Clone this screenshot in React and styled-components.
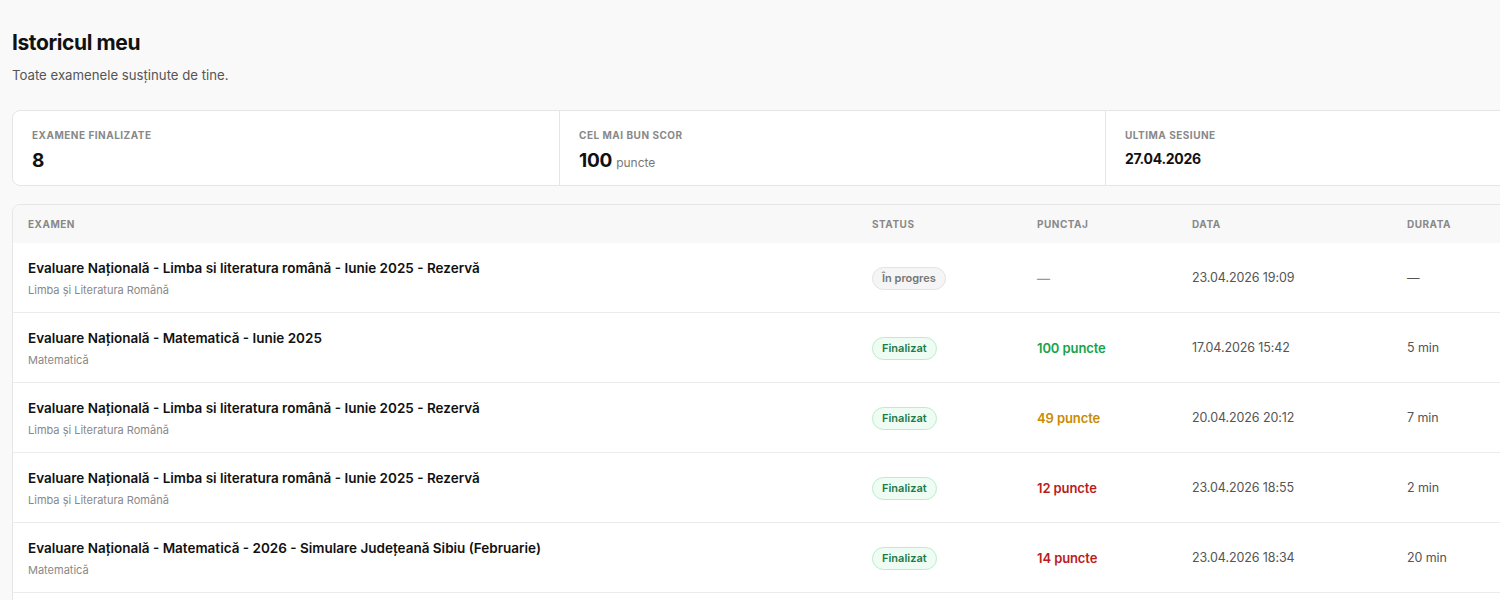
import React from "react";
import styled, { createGlobalStyle } from "styled-components";

const GlobalStyle = createGlobalStyle`
  html, body {
    margin: 0;
    padding: 0;
    background: #f9f9f9;
    overflow: hidden;
  }
  body {
    font-family: Inter, "Liberation Sans", Arial, sans-serif;
    color: #111111;
  }
`;

const Page = styled.div`
  width: 1650px;
  padding: 30px 0 0 12px;
`;

const Title = styled.h1`
  margin: 0;
  font-size: 21px;
  font-weight: 700;
  letter-spacing: -0.4px;
  line-height: 26px;
  color: #111;
`;

const Subtitle = styled.p`
  margin: 10px 0 0;
  font-size: 13.2px;
  line-height: 18px;
  color: #555;
`;

const StatsCard = styled.div`
  margin-top: 26px;
  display: grid;
  grid-template-columns: repeat(3, 546px);
  background: #fff;
  border: 1px solid #e6e6e6;
  border-radius: 8px;
`;

const StatCell = styled.div`
  padding: 17px 19px 14px;
  height: 74px;
  box-sizing: border-box;
  border-left: ${(p) => (p.$first ? "none" : "1px solid #e6e6e6")};
`;

const StatLabel = styled.div`
  font-size: 10px;
  font-weight: 700;
  letter-spacing: 0.5px;
  text-transform: uppercase;
  color: #888;
  line-height: 14px;
`;

const StatValue = styled.div`
  margin-top: ${(p) => (p.$small ? "5px" : "7px")};
  font-size: ${(p) => (p.$small ? "14px" : "19px")};
  font-weight: 700;
  letter-spacing: -0.3px;
  line-height: 24px;
  color: #111;
  & span {
    font-size: 12px;
    font-weight: 400;
    letter-spacing: 0;
    color: #777;
  }
`;

const Table = styled.div`
  margin-top: 18px;
  padding-bottom: 16px;
  background: #fff;
  border: 1px solid #e6e6e6;
  border-radius: 8px;
  overflow: hidden;
`;

const Row = styled.div`
  display: grid;
  grid-template-columns: 844px 165px 155px 215px 1fr;
  align-items: center;
  padding-left: 15px;
  height: ${(p) => (p.$head ? "38px" : "69px")};
  background: ${(p) => (p.$head ? "#f8f8f8" : "#fff")};
  border-bottom: ${(p) => (p.$head ? "none" : "1px solid #ececec")};
`;

const HeadCell = styled.div`
  font-size: 10px;
  font-weight: 700;
  letter-spacing: 0.5px;
  color: #888;
`;

const ExamTitle = styled.div`
  font-size: 13.5px;
  font-weight: 600;
  color: #111;
  line-height: 18px;
`;

const ExamSubject = styled.div`
  margin-top: 6px;
  font-size: 11px;
  color: #888;
  line-height: 14px;
`;

const Badge = styled.span`
  display: inline-block;
  padding: 3px 9px;
  border-radius: 999px;
  font-size: 11px;
  font-weight: 600;
  line-height: 15px;
  background: ${(p) => (p.$done ? "#effcf3" : "#f5f5f5")};
  border: 1px solid ${(p) => (p.$done ? "#bdeccd" : "#e3e3e3")};
  color: ${(p) => (p.$done ? "#1b7a45" : "#777")};
`;

const Score = styled.div`
  font-size: 13px;
  font-weight: 600;
  letter-spacing: -0.1px;
  color: ${(p) => p.$color || "#999"};
`;

const Muted = styled.div`
  font-size: 12.5px;
  letter-spacing: -0.1px;
  color: #555;
`;

const scoreColor = (n) => {
  if (n == null) return "#999";
  if (n >= 80) return "#16a34a";
  if (n >= 30) return "#ca8a04";
  return "#b91c1c";
};

const exams = [
  {
    title: "Evaluare Națională - Limba si literatura română - Iunie 2025 - Rezervă",
    subject: "Limba și Literatura Română",
    done: false,
    score: null,
    date: "23.04.2026 19:09",
    duration: "—",
  },
  {
    title: "Evaluare Națională - Matematică - Iunie 2025",
    subject: "Matematică",
    done: true,
    score: 100,
    date: "17.04.2026 15:42",
    duration: "5 min",
  },
  {
    title: "Evaluare Națională - Limba si literatura română - Iunie 2025 - Rezervă",
    subject: "Limba și Literatura Română",
    done: true,
    score: 49,
    date: "20.04.2026 20:12",
    duration: "7 min",
  },
  {
    title: "Evaluare Națională - Limba si literatura română - Iunie 2025 - Rezervă",
    subject: "Limba și Literatura Română",
    done: true,
    score: 12,
    date: "23.04.2026 18:55",
    duration: "2 min",
  },
  {
    title: "Evaluare Națională - Matematică - 2026 - Simulare Județeană Sibiu (Februarie)",
    subject: "Matematică",
    done: true,
    score: 14,
    date: "23.04.2026 18:34",
    duration: "20 min",
  },
];

const App = () => {
  return (
    <Page>
      <GlobalStyle />
      <Title>Istoricul meu</Title>
      <Subtitle>Toate examenele susținute de tine.</Subtitle>
      <StatsCard>
        <StatCell $first>
          <StatLabel>Examene finalizate</StatLabel>
          <StatValue>8</StatValue>
        </StatCell>
        <StatCell>
          <StatLabel>Cel mai bun scor</StatLabel>
          <StatValue>
            100 <span>puncte</span>
          </StatValue>
        </StatCell>
        <StatCell>
          <StatLabel>Ultima sesiune</StatLabel>
          <StatValue $small>27.04.2026</StatValue>
        </StatCell>
      </StatsCard>
      <Table>
        <Row $head>
          <HeadCell>EXAMEN</HeadCell>
          <HeadCell>STATUS</HeadCell>
          <HeadCell>PUNCTAJ</HeadCell>
          <HeadCell>DATA</HeadCell>
          <HeadCell>DURATA</HeadCell>
        </Row>
        {exams.map((e, i) => (
          <Row key={i}>
            <div>
              <ExamTitle>{e.title}</ExamTitle>
              <ExamSubject>{e.subject}</ExamSubject>
            </div>
            <div>
              <Badge $done={e.done}>{e.done ? "Finalizat" : "În progres"}</Badge>
            </div>
            <Score $color={scoreColor(e.score)}>
              {e.score == null ? "—" : `${e.score} puncte`}
            </Score>
            <Muted>{e.date}</Muted>
            <Muted>{e.duration}</Muted>
          </Row>
        ))}
      </Table>
    </Page>
  );
};

export default App;
